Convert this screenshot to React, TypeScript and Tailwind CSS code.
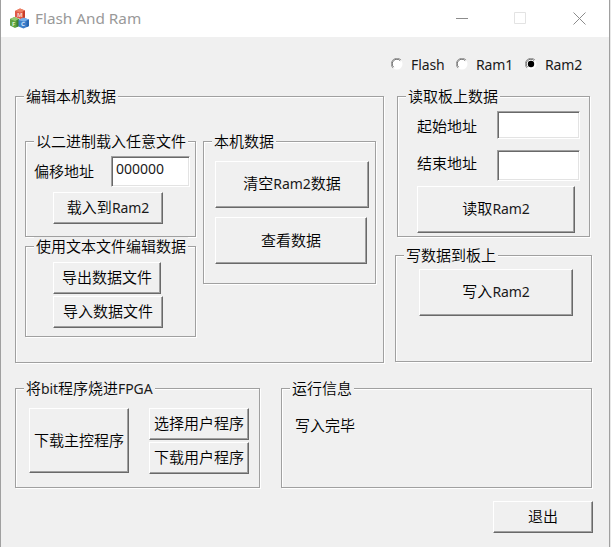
import type { ReactNode } from "react";
import { clsx } from "clsx";

/** Splits mixed text so that Latin runs get their own, slightly smaller face. */
function Mixed({ text }: { text: string }) {
  return (
    <>
      {text.split(/([A-Za-z0-9]+)/).map((part, i) =>
        /^[A-Za-z0-9]+$/.test(part) ? (
          <span key={i} className="font-['Noto_Sans',sans-serif] text-[14px] font-normal tracking-[-0.1px] text-[#1a1a1a]">
            {part}
          </span>
        ) : (
          part
        ),
      )}
    </>
  );
}

function Group({ title, className, children }: { title: string; className: string; children: ReactNode }) {
  return (
    <section
      className={clsx(
        "flex shrink-0 flex-col items-start border border-[#a0a0a0] shadow-[1px_1px_0_#fff,inset_1px_1px_0_#fff]",
        className,
      )}
    >
      <h2 className="-mt-[10px] mb-0.5 ml-2 h-[17px] shrink-0 whitespace-nowrap bg-[#f0f0f0] px-0.5 leading-[17px] font-[350]">
        <Mixed text={title} />
      </h2>
      {children}
    </section>
  );
}

function Button({ label, className }: { label: string; className: string }) {
  return (
    <button
      className={clsx(
        "flex shrink-0 items-center justify-center whitespace-nowrap border border-t-white border-r-[#696969] border-b-[#696969] border-l-white pb-0.5 shadow-[inset_-1px_-1px_0_#a0a0a0]",
        className,
      )}
    >
      <span className="leading-5">
        <Mixed text={label} />
      </span>
    </button>
  );
}

function Field({ value, className }: { value?: string; className: string }) {
  return (
    <input
      defaultValue={value}
      className={clsx(
        "shrink-0 border border-t-[#a0a0a0] border-r-white border-b-white border-l-[#a0a0a0] bg-white pb-1.5 pl-1 font-['Noto_Sans',sans-serif] text-[14px] font-normal text-[#1a1a1a] shadow-[inset_1px_1px_0_#696969,inset_-1px_-1px_0_#e3e3e3] outline-none",
        className,
      )}
    />
  );
}

function Radio({ label, checked, className }: { label: string; checked?: boolean; className?: string }) {
  return (
    <label className={clsx("flex shrink-0 items-center gap-2", className)}>
      <svg width="12" height="12" viewBox="0 0 12 12">
        <circle cx="6" cy="6" r="5.5" fill="#fff" />
        <path d="M1.9 10.1A5.5 5.5 0 0 1 10.1 1.9" fill="none" stroke="#a0a0a0" />
        <path d="M2.6 9.2A4.6 4.6 0 0 1 9.2 2.6" fill="none" stroke="#696969" />
        {checked && <circle cx="6" cy="6" r="3.2" fill="#000" />}
      </svg>
      <Mixed text={label} />
    </label>
  );
}

function AppIcon() {
  return (
    <svg width="21" height="22" viewBox="0 0 21 22" className="font-['Noto_Sans',sans-serif] font-bold">
      <path d="M6 3 11 0.5 16 2.5V9.5L11.5 11 6 9Z" fill="#df5a45" />
      <path d="M6 3 11 0.5 16 2.5 11.5 4.5Z" fill="#ee8266" />
      <path d="M14 3.5 16 2.5V9.5L14 10.3Z" fill="#c63c2c" />
      <path d="M1 11 5.5 9 10 11V18L6 20 1 17.5Z" fill="#5fa341" />
      <path d="M1 11 5.5 9 10 11 6 13Z" fill="#95c970" />
      <path d="M7.5 12.3 10 11V18L7.5 19.3Z" fill="#3c8130" />
      <path d="M9.5 12 14.5 9.8 20 11.5V18L14.5 20.5 9.5 18.5Z" fill="#3e7fca" />
      <path d="M9.5 12 14.5 9.8 20 11.5 15 13.8Z" fill="#79b0e8" />
      <path d="M17.5 12.7 20 11.5V18L17.5 19.2Z" fill="#2766b2" />
      <text x="8" y="9" fontSize="6" fill="#fbd5ca">M</text>
      <text x="3" y="17.5" fontSize="6" fill="#e0f2d2">F</text>
      <text x="12" y="18.3" fontSize="6" fill="#d9ebfc">C</text>
    </svg>
  );
}

export default function App() {
  return (
    <div className="h-[547px] w-[611px] overflow-hidden bg-[#e8e8e8]">
      <div className="flex h-full w-[610px] flex-col border-x border-[#a0a0a0] bg-[#f0f0f0] font-['Noto_Sans_CJK_SC',sans-serif] text-[15px] font-[350] text-black">
        <header className="flex h-[37px] shrink-0 items-center bg-white pl-2">
          <AppIcon />
          <h1 className="ml-[5px] w-[420px] font-['Noto_Sans',sans-serif] text-[15.3px] font-normal text-[#999]">Flash And Ram</h1>
          <svg width="132" height="13" viewBox="0 0 132 13" fill="none" stroke="#8c8c8c">
            <path d="M1 6.5H13" />
            <path d="M59.5 0.5H70.5V11.5H59.5Z" stroke="#e3e3e3" />
            <path d="M118.5 0.5 130.5 12.5M130.5 0.5 118.5 12.5" />
          </svg>
        </header>

        <div className="mb-[5px] flex h-[54px] shrink-0 items-center pl-[390px]">
          <Radio label="Flash" className="w-[65px]" />
          <Radio label="Ram1" className="w-[69px]" />
          <Radio label="Ram2" checked />
        </div>

        <main className="pl-3.5">
          <div className="flex">
            <Group title="编辑本机数据" className="h-[267px] w-[369px]">
              <div className="mt-[35px] flex pl-[9px]">
                <div className="flex flex-col gap-[9px]">
                  <Group title="以二进制载入任意文件" className="h-24 w-[171px]">
                    <div className="mt-[5px] flex items-center pl-2">
                      <span className="w-[77px]">偏移地址</span>
                      <Field value="000000" className="h-[31px] w-[79px]" />
                    </div>
                    <Button label="载入到Ram2" className="mt-[5px] ml-[27px] h-8 w-[110px]" />
                  </Group>
                  <Group title="使用文本文件编辑数据" className="h-[91px] w-[171px]">
                    <div className="mt-1.5 ml-[27px] flex flex-col gap-0.5">
                      <Button label="导出数据文件" className="h-8 w-[108px]" />
                      <Button label="导入数据文件" className="h-8 w-[110px]" />
                    </div>
                  </Group>
                </div>
                <Group title="本机数据" className="ml-[7px] h-[143px] w-[173px]">
                  <div className="mt-2.5 ml-[11px] flex flex-col gap-[9px]">
                    <Button label="清空Ram2数据" className="h-[47px] w-[154px]" />
                    <Button label="查看数据" className="h-[47px] w-[152px]" />
                  </div>
                </Group>
              </div>
            </Group>

            <div className="ml-[11px] flex flex-col gap-[18px]">
              <Group title="读取板上数据" className="ml-0.5 h-[141px] w-[193px]">
                <div className="mt-[5px] ml-[19px] flex flex-col">
                  <div className="flex h-7 items-center">
                    <span className="w-20 pt-[3px]">起始地址</span>
                    <Field className="h-7 w-[83px]" />
                  </div>
                  <div className="mt-[11px] flex h-[31px] items-center">
                    <span className="w-20 pb-[5px]">结束地址</span>
                    <Field className="h-[31px] w-[83px]" />
                  </div>
                  <Button label="读取Ram2" className="mt-[5px] h-[47px] w-[158px]" />
                </div>
              </Group>
              <Group title="写数据到板上" className="h-[107px] w-[197px]">
                <Button label="写入Ram2" className="mt-1 ml-[23px] h-[47px] w-[154px]" />
              </Group>
            </div>
          </div>

          <div className="mt-[25px] flex gap-[21px]">
            <Group title="将bit程序烧进FPGA" className="h-[100px] w-[245px]">
              <div className="mt-2.5 ml-[13px] flex gap-5">
                <Button label="下载主控程序" className="h-[65px] w-[100px]" />
                <div className="flex flex-col gap-0.5">
                  <Button label="选择用户程序" className="h-8 w-[100px]" />
                  <Button label="下载用户程序" className="h-8 w-[100px]" />
                </div>
              </div>
            </Group>
            <Group title="运行信息" className="h-[100px] w-[311px]">
              <p className="mt-[17px] ml-[13px] leading-5">写入完毕</p>
            </Group>
          </div>

          <Button label="退出" className="mt-[13px] ml-[478px] h-8 w-[100px]" />
        </main>
      </div>
    </div>
  );
}
